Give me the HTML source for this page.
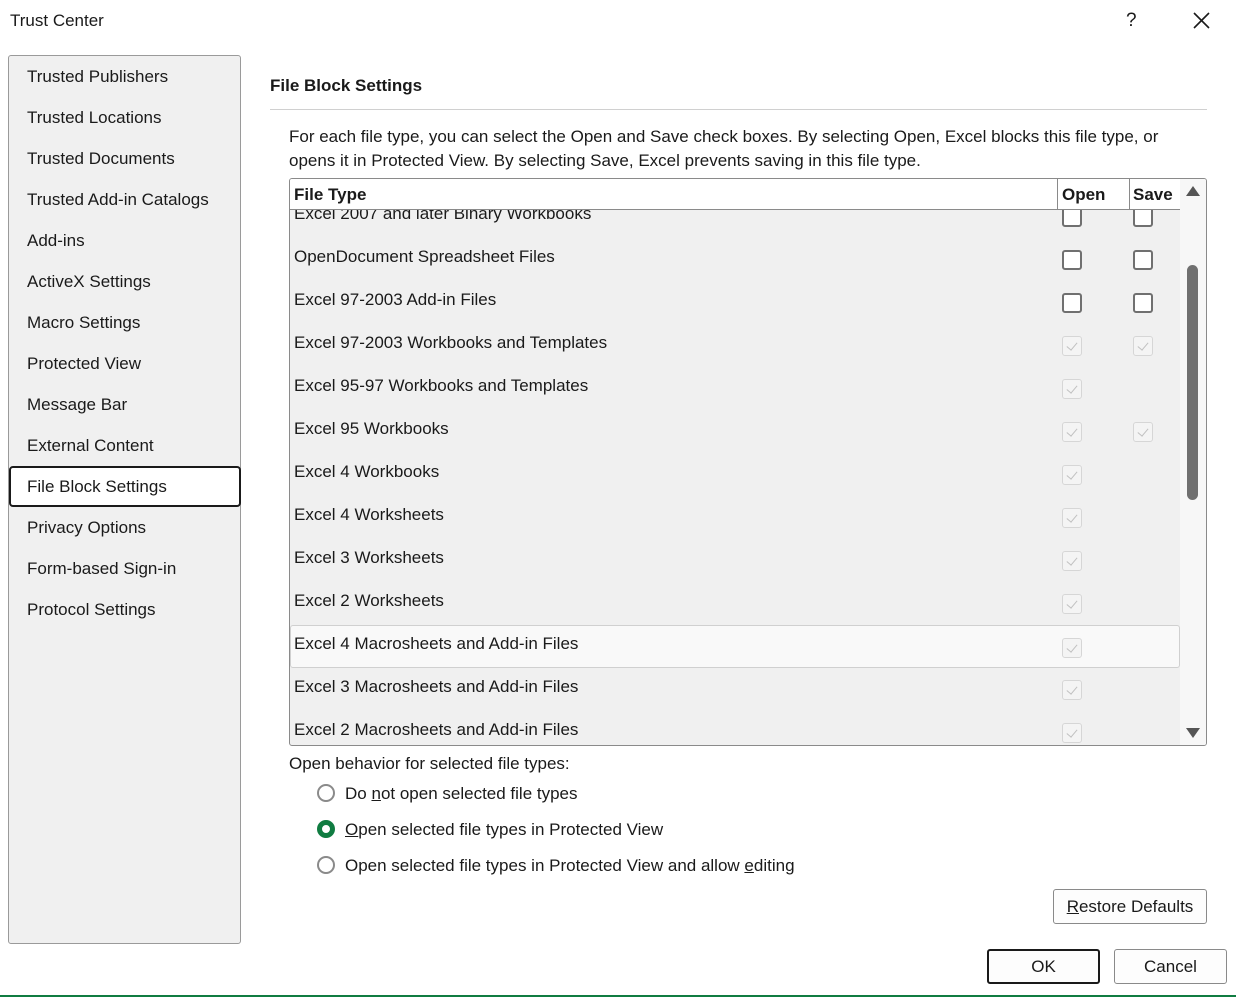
<!DOCTYPE html>
<html><head><style>
*{box-sizing:border-box;margin:0;padding:0}
body{width:1236px;height:997px;background:#fff;font-family:"Liberation Sans",sans-serif;color:#1a1a1a;position:relative;overflow:hidden;font-size:17px}
.a{position:absolute;white-space:nowrap}
.nav{position:absolute;left:8px;top:55px;width:233px;height:889px;background:#f0f0f0;border:1px solid #9a9a9a;border-radius:3px}
.ni{position:absolute;left:18px;font-size:17px;margin-top:1px}
.sel{position:absolute;left:0;top:410px;width:232px;height:41px;background:#fff;border:2px solid #1a1a1a;border-radius:4px}
.tbl{position:absolute;left:289px;top:178px;width:918px;height:568px;border:1px solid #8a8a8a;border-radius:3px;background:#f0f0f0;overflow:hidden}
.hdr{position:absolute;left:0;top:0;width:891px;height:31px;background:#fff;border-bottom:1px solid #8a8a8a;font-weight:bold}
.row{position:absolute;left:0;width:890px;height:43px}
.row>span{top:11px}
.cb{position:absolute;width:20px;height:20px;border:2px solid #707070;border-radius:3px;background:#fff}
.cbd{position:absolute;width:20px;height:20px;border:1px solid #d6d6d6;border-radius:3px;background:#f4f4f4}
.cbd:after{content:"";position:absolute;left:6px;top:3px;width:5px;height:9px;border-right:1px solid #c0c0c0;border-bottom:1px solid #c0c0c0;transform:rotate(40deg)}
.rad{position:absolute;left:317px;width:18px;height:18px;border:2px solid #8a8a8a;border-radius:50%;background:#fff}
.btn{position:absolute;height:35px;border:1px solid #8a8a8a;border-radius:3px;background:#fdfdfd;text-align:center;line-height:33px;font-size:17px}
</style></head><body>
<div class="a" style="left:10px;top:11px;font-size:17px">Trust Center</div>
<div class="a" style="left:1126px;top:10px;font-size:19px">?</div>
<svg class="a" style="left:1193px;top:12px" width="17" height="17"><path d="M1 1L16 16M16 1L1 16" stroke="#1a1a1a" stroke-width="1.6"/></svg>
<div class="nav">
<div class="sel"></div>
<div class="ni" style="top:10px">Trusted Publishers</div>
<div class="ni" style="top:51px">Trusted Locations</div>
<div class="ni" style="top:92px">Trusted Documents</div>
<div class="ni" style="top:133px">Trusted Add-in Catalogs</div>
<div class="ni" style="top:174px">Add-ins</div>
<div class="ni" style="top:215px">ActiveX Settings</div>
<div class="ni" style="top:256px">Macro Settings</div>
<div class="ni" style="top:297px">Protected View</div>
<div class="ni" style="top:338px">Message Bar</div>
<div class="ni" style="top:379px">External Content</div>
<div class="ni" style="top:420px">File Block Settings</div>
<div class="ni" style="top:461px">Privacy Options</div>
<div class="ni" style="top:502px">Form-based Sign-in</div>
<div class="ni" style="top:543px">Protocol Settings</div>
</div>
<div class="a" style="left:270px;top:76px;font-weight:bold;font-size:17px">File Block Settings</div>
<div class="a" style="left:270px;top:109px;width:937px;height:1px;background:#d0d0d0"></div>
<div class="a" style="left:289px;top:125px;font-size:17px;line-height:24px">For each file type, you can select the Open and Save check boxes. By selecting Open, Excel blocks this file type, or<br>opens it in Protected View. By selecting Save, Excel prevents saving in this file type.</div>
<div class="tbl">
<div class="row" style="top:14px"><span class="a" style="left:4px">Excel 2007 and later Binary Workbooks</span><div class="cb" style="left:772px;top:14px"></div><div class="cb" style="left:843px;top:14px"></div></div>
<div class="row" style="top:57px"><span class="a" style="left:4px">OpenDocument Spreadsheet Files</span><div class="cb" style="left:772px;top:14px"></div><div class="cb" style="left:843px;top:14px"></div></div>
<div class="row" style="top:100px"><span class="a" style="left:4px">Excel 97-2003 Add-in Files</span><div class="cb" style="left:772px;top:14px"></div><div class="cb" style="left:843px;top:14px"></div></div>
<div class="row" style="top:143px"><span class="a" style="left:4px">Excel 97-2003 Workbooks and Templates</span><div class="cbd" style="left:772px;top:14px"></div><div class="cbd" style="left:843px;top:14px"></div></div>
<div class="row" style="top:186px"><span class="a" style="left:4px">Excel 95-97 Workbooks and Templates</span><div class="cbd" style="left:772px;top:14px"></div></div>
<div class="row" style="top:229px"><span class="a" style="left:4px">Excel 95 Workbooks</span><div class="cbd" style="left:772px;top:14px"></div><div class="cbd" style="left:843px;top:14px"></div></div>
<div class="row" style="top:272px"><span class="a" style="left:4px">Excel 4 Workbooks</span><div class="cbd" style="left:772px;top:14px"></div></div>
<div class="row" style="top:315px"><span class="a" style="left:4px">Excel 4 Worksheets</span><div class="cbd" style="left:772px;top:14px"></div></div>
<div class="row" style="top:358px"><span class="a" style="left:4px">Excel 3 Worksheets</span><div class="cbd" style="left:772px;top:14px"></div></div>
<div class="row" style="top:401px"><span class="a" style="left:4px">Excel 2 Worksheets</span><div class="cbd" style="left:772px;top:14px"></div></div>
<div class="row" style="top:446px;background:#f9f9f9;border:1px solid #d0d0d0;border-radius:3px;height:43px"><span class="a" style="left:3px;top:8px">Excel 4 Macrosheets and Add-in Files</span><div class="cbd" style="left:771px;top:12px"></div></div>
<div class="row" style="top:487px"><span class="a" style="left:4px">Excel 3 Macrosheets and Add-in Files</span><div class="cbd" style="left:772px;top:14px"></div></div>
<div class="row" style="top:530px"><span class="a" style="left:4px">Excel 2 Macrosheets and Add-in Files</span><div class="cbd" style="left:772px;top:14px"></div></div>
<div class="hdr"><span class="a" style="left:4px;top:6px">File Type</span><div class="a" style="left:767px;top:0;width:1px;height:31px;background:#8a8a8a"></div><span class="a" style="left:772px;top:6px">Open</span><div class="a" style="left:839px;top:0;width:1px;height:31px;background:#8a8a8a"></div><span class="a" style="left:843px;top:6px">Save</span><div class="a" style="left:890px;top:0;width:1px;height:31px;background:#8a8a8a"></div></div>
<div class="a" style="left:890px;top:0;width:27px;height:568px;background:#f7f7f7"></div>
<svg class="a" style="left:896px;top:7px" width="14" height="11"><path d="M7 0L14 10H0Z" fill="#555"/></svg>
<div class="a" style="left:897px;top:86px;width:11px;height:235px;background:#707070;border-radius:6px"></div>
<svg class="a" style="left:896px;top:549px" width="14" height="11"><path d="M0 0H14L7 10Z" fill="#555"/></svg>
</div>
<div class="a" style="left:289px;top:754px">Open behavior for selected file types:</div>
<div class="rad" style="top:784px"></div>
<div class="a" style="left:345px;top:784px">Do <u>n</u>ot open selected file types</div>
<div class="rad" style="top:820px;border:5px solid #107c41"></div>
<div class="a" style="left:345px;top:820px"><u>O</u>pen selected file types in Protected View</div>
<div class="rad" style="top:856px"></div>
<div class="a" style="left:345px;top:856px">Open selected file types in Protected View and allow <u>e</u>diting</div>
<div class="btn" style="left:1053px;top:889px;width:154px"><u>R</u>estore Defaults</div>
<div class="btn" style="left:987px;top:949px;width:113px;border:2px solid #1a1a1a;line-height:31px">OK</div>
<div class="btn" style="left:1114px;top:949px;width:113px">Cancel</div>
<div class="a" style="left:0;top:995px;width:1236px;height:2px;background:#107c41"></div>
</body></html>
